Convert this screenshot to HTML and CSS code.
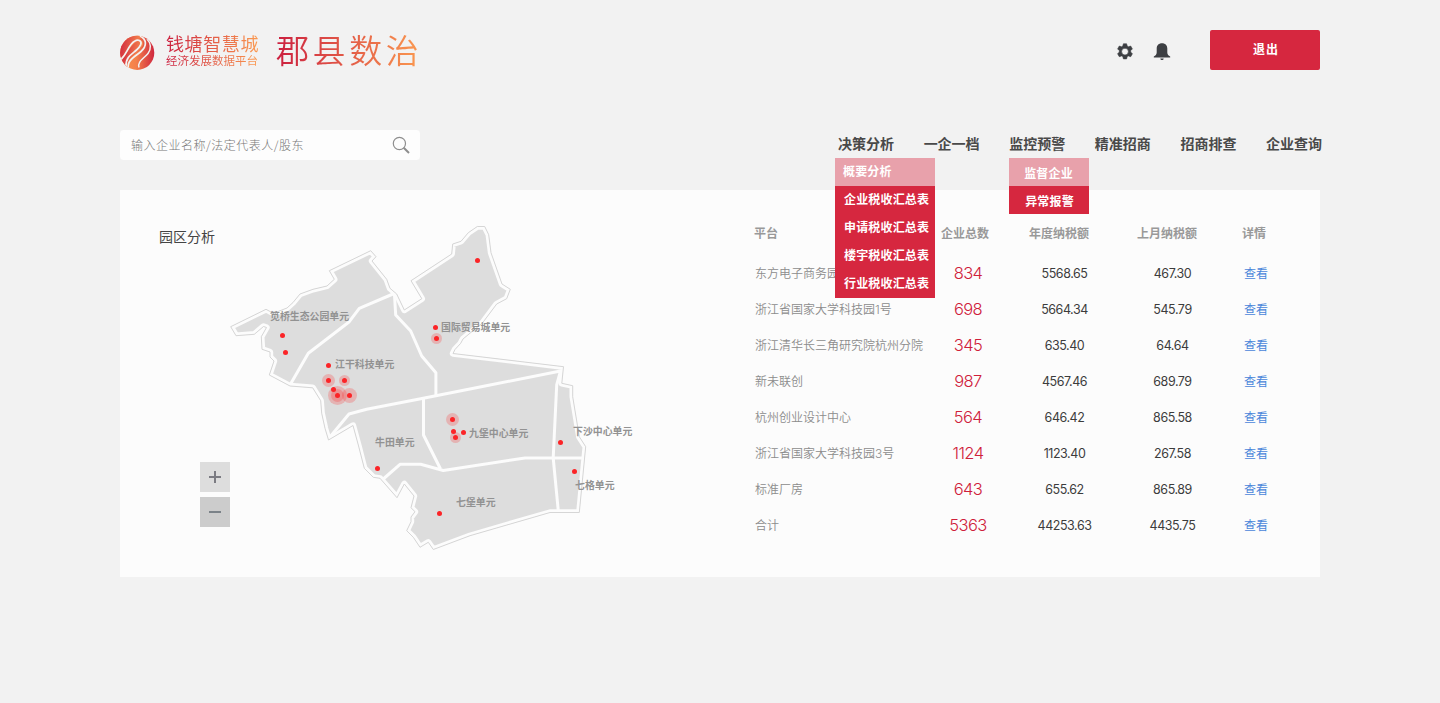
FILE: index.html
```
<!DOCTYPE html>
<html lang="zh-CN">
<head>
<meta charset="utf-8">
<title>郡县数治</title>
<link rel="stylesheet" href="styles.css">
</head>
<body>
<div class="page">
  <header class="header">
    <div class="brand">
      <svg class="logo" width="36" height="36" viewBox="0 0 36 36">
        <defs>
          <linearGradient id="warm" x1="0" y1="0" x2="1" y2="0.2"><stop offset="0" stop-color="#cc1f3e"/><stop offset="1" stop-color="#f98c4e"/></linearGradient>
          <linearGradient id="warmBack" x1="0" y1="0" x2="1" y2="0"><stop offset="0" stop-color="#fb9450"/><stop offset=".45" stop-color="#f4804b"/><stop offset="1" stop-color="#cc1f3e"/></linearGradient>
          <clipPath id="disc"><circle cx="17.2" cy="17.800" r="17.1"/></clipPath>
        </defs>
        <g clip-path="url(#disc)">
          <rect width="36" height="36" fill="url(#warmBack)"/>
          <path d="M-1 26C4 20 6 17 9 12C12 7 16 4 22 2L18 -1H-1Z" fill="url(#warm)"/>
          <path d="M1 26C5 21 7 16 11 12C15 7 20 4 22 6C25 9 21 13 18 16C12 21 7 24 7 33L3 32Z" fill="url(#warm)"/>
          <g fill="none" stroke="#f2f2f2" stroke-width="1.700">
            <path d="M1 24.500C6 20 7 14.500 11 9.500C13.500 6.500 17 4.500 19.500 5.500C23 7.500 20 12 16.500 15C12 19 5.500 22 6 31.500"/>
            <path d="M8.500 34C6 25.500 16 21 21 16.500C27 11 27 4.500 20 1"/>
            <path d="M19 32.500C17 26.500 24 23.500 28 18.500C31.500 14 31 8 27 4" stroke-width="1.500"/>
          </g>
        </g>
      </svg>
      <div class="brand-names">
        <div class="brand-city">钱塘智慧城</div>
        <div class="brand-platform">经济发展数据平台</div>
      </div>
      <div class="brand-title">郡县数治</div>
    </div>
    <div class="tools">
      <svg class="gear" width="18" height="18" viewBox="0 0 18 18"><path fill="#3d3f43" stroke="#3d3f43" stroke-width=".6" stroke-linejoin="round" fill-rule="evenodd" d="M7.400 .8h3.200l.6 2.300 1.200.7 2.300-.8 1.700 2.900-1.700 1.700v1.500l1.700 1.700-1.700 2.900-2.300-.8-1.200.7-.6 2.300H7.400l-.6-2.300-1.200-.7-2.300.8-1.700-2.900 1.700-1.700V7.600L1.600 5.900l1.700-2.900 2.300.8 1.200-.7zM9 5.200a3.400 3.400 0 1 0 0 6.800 3.400 3.400 0 0 0 0-6.800z"/></svg>
      <svg class="bell" width="18" height="18" viewBox="0 0 18 18"><path fill="#3d3f43" d="M9 .3C5.700 .3 3.700 2.400 3.700 5.600V9.500C3.700 11.500 2.500 12.500 .8 13.600V14.400H17.200V13.600C15.500 12.500 14.300 11.500 14.300 9.500V5.600C14.300 2.400 12.300 .3 9 .3ZM7.300 15.600H10.700C10.500 17.600 7.500 17.600 7.300 15.600Z"/></svg>
      <button class="logout">退出</button>
    </div>
  </header>

  <div class="bar">
    <div class="search">
      <span>输入企业名称/法定代表人/股东</span>
      <svg width="18" height="18" viewBox="0 0 18 18" fill="none" stroke="#8e8e8e"><circle cx="7.400" cy="7.500" r="6.100" stroke-width="1.200"/><path d="M11.700 11.800L17 17" stroke-width="2"/></svg>
    </div>
    <nav class="nav">
      <div class="nav-item">决策分析
        <div class="menu menu-wide">
          <div class="menu-item active">概要分析</div>
          <div class="menu-item">企业税收汇总表</div>
          <div class="menu-item">申请税收汇总表</div>
          <div class="menu-item">楼宇税收汇总表</div>
          <div class="menu-item">行业税收汇总表</div>
        </div>
      </div>
      <div class="nav-item">一企一档</div>
      <div class="nav-item">监控预警
        <div class="menu menu-narrow">
          <div class="menu-item active">监督企业</div>
          <div class="menu-item">异常报警</div>
        </div>
      </div>
      <div class="nav-item">精准招商</div>
      <div class="nav-item">招商排查</div>
      <div class="nav-item">企业查询</div>
    </nav>
  </div>

  <main class="panel">
    <section class="map-side">
      <h2 class="map-title">园区分析</h2>
      <div class="map-row">
        <div class="zoom-controls">
          <button class="zoom-in"><svg width="12" height="12"><path d="M0 6H12M6 0V12" stroke="#7b7b82" stroke-width="2"/></svg></button>
          <button class="zoom-out"><svg width="12" height="12"><path d="M0 6H12" stroke="#7b8288" stroke-width="2"/></svg></button>
        </div>
        <svg class="map" width="410" height="330" viewBox="230 222 410 330">
          <defs>
            <path id="area" d="M230.700 326.700L266 309.300L271 312L278 311.500L287 308L293 302.500L300 294L313 289.300L327 286L334.300 279.300L329.300 270.700L370.700 250.700L376 256.700L372 261L386.700 279.300L390 288.300L396.700 294L404.300 310L421.800 298.700L411 280.700L451.700 254L452.700 244L461 241.300L468.300 232.700L477.300 226.500H484.700L488.700 234.700L491 252.700L502 284L510.300 289.300L506.700 298.700L496.700 304L482.700 322.700L463 339L460.700 343.300L455 349.500L453 353.500L563.500 366.700L561.800 383.300L572.700 385.700V396.700L579.300 436.700L585.700 446.700L579.300 512.500H550L470 535.700L433.300 549.500L428.300 542.300L420 547.300L413.300 537.300L406.700 530.700L411 521.700V517L415 511.700L411 507.700L414 496L404.300 484L397 497.700L380 478.300L373.300 477.300L364.300 468.300L358.300 445L353 425.500L328.500 440L325 428.300L321.700 413.300L320.700 400.700L312.700 387.800L290 386L269.300 375L274 361L270 357V352L262 349.300L261.300 336.700L266.500 327.500L263.500 326.500L254.300 334.300L236 335.700Z"/>
            <clipPath id="inside"><use href="#area"/></clipPath>
          </defs>
          <use href="#area" fill="#ddd"/>
          <g clip-path="url(#inside)" fill="none" stroke="#fcfcfc" stroke-linejoin="round">
            <use href="#area" stroke-width="6.400"/>
            <g stroke-width="3">
              <path d="M396.500 292.500L359.300 308.300L349.300 321.700L308.300 353.300L290 385"/>
              <path d="M394.300 292L395.700 315L410.700 331L421.700 356L435.900 372.700V396"/>
              <path d="M328.300 439L349 414L366.700 409.300L423.300 398.300L490 385L563 370.500"/>
              <path d="M423.500 398V435L440.500 469"/>
              <path d="M381 481L400 464.300H420.700L443.300 470.500L525 457.900H584"/>
              <path d="M560.500 371L556.700 385L553.200 458L558.500 513"/>
            </g>
          </g>
          <use href="#area" fill="none" stroke="#d6d6d6" stroke-width="1"/>
          <g fill="#f22" fill-opacity=".22">
            <circle cx="436.500" cy="338.500" r="5.500"/><circle cx="328.500" cy="380.500" r="6.500"/><circle cx="344.500" cy="380.500" r="5.500"/><circle cx="337.500" cy="395.500" r="9.500"/><circle cx="337.500" cy="395.500" r="6.500"/><circle cx="349.500" cy="395.500" r="7.500"/><circle cx="452.500" cy="419.500" r="6.500"/><circle cx="455.500" cy="437.500" r="5.500"/>
          </g>
          <g fill="#fb2427">
            <circle cx="477.500" cy="260.500" r="2.500"/><circle cx="282.500" cy="335.500" r="2.500"/><circle cx="285.500" cy="352.500" r="2.500"/><circle cx="435.500" cy="327.500" r="2.500"/><circle cx="436.500" cy="338.500" r="2.500"/><circle cx="328.500" cy="365.500" r="2.500"/><circle cx="328.500" cy="380.500" r="2.500"/><circle cx="344.500" cy="380.500" r="2.500"/><circle cx="333.500" cy="389.500" r="2.500"/><circle cx="337.500" cy="395.500" r="2.500"/><circle cx="349.500" cy="395.500" r="2.500"/><circle cx="452.500" cy="419.500" r="2.500"/><circle cx="453.500" cy="431.500" r="2.500"/><circle cx="463.500" cy="432.500" r="2.500"/><circle cx="455.500" cy="437.500" r="2.500"/><circle cx="377.500" cy="468.500" r="2.500"/><circle cx="439.500" cy="513.500" r="2.500"/><circle cx="560.500" cy="442.500" r="2.500"/><circle cx="574.500" cy="471.500" r="2.500"/>
          </g>
          <g class="map-label">
            <text x="270" y="320">笕桥生态公园单元</text><text x="441" y="331">国际贸易城单元</text><text x="335" y="368">江干科技单元</text><text x="375" y="446">牛田单元</text><text x="469" y="437">九堡中心单元</text><text x="573" y="435">下沙中心单元</text><text x="575" y="489">七格单元</text><text x="456" y="506">七堡单元</text>
          </g>
        </svg>
      </div>
    </section>
    <section class="table">
      <div class="row head"><span>平台</span><span>企业总数</span><span>年度纳税额</span><span>上月纳税额</span><span>详情</span></div>
      <div class="row"><span>东方电子商务园</span><b>834</b><i>5568.65</i><i>467.30</i><a>查看</a></div>
      <div class="row"><span>浙江省国家大学科技园1号</span><b>698</b><i>5664.34</i><i>545.79</i><a>查看</a></div>
      <div class="row"><span>浙江清华长三角研究院杭州分院</span><b>345</b><i>635.40</i><i>64.64</i><a>查看</a></div>
      <div class="row"><span>新未联创</span><b>987</b><i>4567.46</i><i>689.79</i><a>查看</a></div>
      <div class="row"><span>杭州创业设计中心</span><b>564</b><i>646.42</i><i>865.58</i><a>查看</a></div>
      <div class="row"><span>浙江省国家大学科技园3号</span><b>1124</b><i>1123.40</i><i>267.58</i><a>查看</a></div>
      <div class="row"><span>标准厂房</span><b>643</b><i>655.62</i><i>865.89</i><a>查看</a></div>
      <div class="row"><span>合计</span><b>5363</b><i>44253.63</i><i>4435.75</i><a>查看</a></div>
    </section>
  </main>
</div>
</body>
</html>
```
FILE: styles.css
```
* { box-sizing: border-box; }
body { margin: 0; background: #f2f2f2; font-family: "Liberation Sans", "Noto Sans CJK SC", sans-serif; color: #444; }
button { border: 0; padding: 0; font-family: inherit; }
.page { width: 1200px; margin: 0 auto; padding-top: 30px; }

.header { display: flex; justify-content: space-between; height: 40px; }
.brand { display: flex; }
.logo { margin: 5px 10px 0 0; }
.brand-names { width: 110px; padding-top: 4px; }
.brand-city, .brand-platform, .brand-title { color: transparent; background: linear-gradient(90deg, #cb1f3f, #fb9a50); background-clip: text; -webkit-background-clip: text; white-space: nowrap; width: max-content; font-weight: 400; }
.brand-city { font-size: 18px; line-height: 22px; letter-spacing: .6px; }
.brand-platform { font-size: 11.5px; line-height: 14px; margin-top: -2px; font-weight: 400; }
.brand-title { font-size: 33px; line-height: 44px; height: 44px; letter-spacing: 3.6px; font-weight: 350; }
.tools { display: flex; align-items: center; }
.gear { margin: 3px 19px 0 0; }
.bell { margin: 3px 39.5px 0 0; }
.logout { width: 110px; height: 40px; border-radius: 2px; background: #d6273f; color: #fff; font-size: 12px; font-weight: 700; letter-spacing: 1px; padding: 0 0 3px 2px; }

.bar { display: flex; justify-content: space-between; margin-top: 60px; height: 30px; }
.search { width: 300px; display: flex; align-items: center; justify-content: space-between; padding: 0 10px 0 11px; border-radius: 4px; background: #fdfdfd; font-family: "Noto Sans CJK SC", sans-serif; font-size: 12px; font-weight: 300; letter-spacing: .5px; color: #777; }
.search span { padding-bottom: 1px; }
.nav { display: flex; gap: 29.600px; margin-right: -2px; }
.nav-item { position: relative; font-size: 14px; font-weight: 700; line-height: 29px; color: #494949; }
.menu { position: absolute; z-index: 2; top: 28px; background: #d6273f; color: #fff; font-size: 12px; line-height: 28px; white-space: nowrap; }
.menu-item { height: 28px; padding-left: 9px; letter-spacing: .15px; }
.menu-item.active { background: #e8a1ab; padding-left: 8px; line-height: 29px; }
.menu-wide { left: -3px; width: 100px; }
.menu-narrow { left: 0; width: 80px; }
.menu-narrow .menu-item { padding-left: 16px; line-height: 32px; }
.menu-narrow .menu-item.active { padding-left: 15px; }

.panel { margin-top: 30px; height: 387px; background: #fcfcfc; display: flex; }
.map-side { width: 634px; }
.map-title { margin: 37px 0 0 39px; height: 20px; line-height: 20px; font-size: 14px; font-weight: 400; }
.map-row { display: flex; align-items: flex-start; margin-top: -25px; }
.zoom-controls { margin: 240px 0 0 80px; width: 30px; display: flex; flex-direction: column; gap: 5px; }
.zoom-controls button { width: 30px; height: 30px; display: flex; align-items: center; justify-content: center; }
.zoom-in { background: #ddd; }
.zoom-out { background: #ccc; }
.map-label { font-family: "Noto Sans CJK SC", sans-serif; font-size: 9.900px; font-weight: 700; fill: #929292; }

.table { padding-top: 25px; }
.row { display: grid; grid-template-columns: 166px 96px 97px 119px 48px; height: 36px; align-items: center; text-align: center; font-size: 12px; color: #8c8c8c; }
.row > :first-child { text-align: left; white-space: nowrap; padding: 0 0 2px 1px; font-family: Inter, "Noto Sans CJK SC", sans-serif; font-weight: 350; }
.row.head { grid-template-columns: 163px 96px 92px 124px 50px; height: 35px; padding-bottom: 1px; color: #999; font-weight: 700; margin-bottom: 5px; }
.row.head > :first-child { padding: 0; font-family: inherit; font-weight: 700; }
.row b { font-family: Inter, sans-serif; font-size: 16.5px; letter-spacing: -.6px; font-weight: 300; color: #cf203a; }
.row i { font-family: Inter, sans-serif; font-size: 12.5px; letter-spacing: -.45px; font-style: normal; color: #3c3c3c; }
.row a { color: #4a86da; padding-bottom: 2px; }
```
